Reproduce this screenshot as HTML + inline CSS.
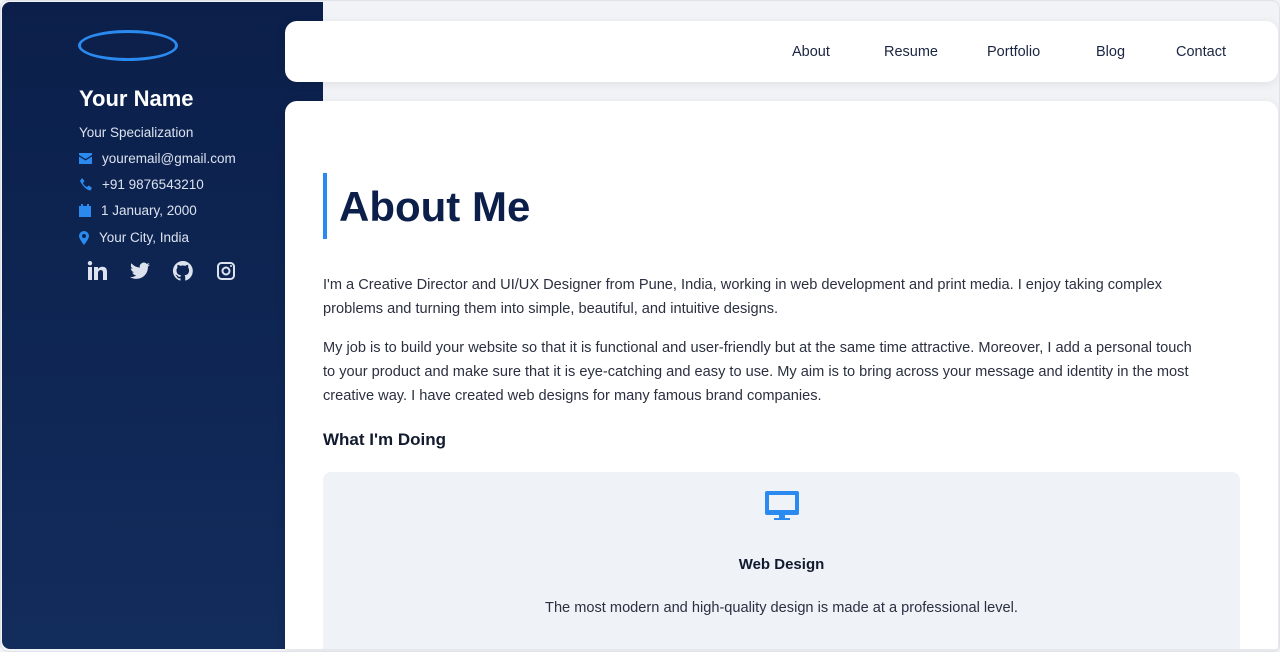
<!DOCTYPE html>
<html><head><meta charset="utf-8"><style>
*{box-sizing:border-box;margin:0;padding:0}
html,body{width:1280px;height:652px;overflow:hidden}
body{background:#f2f3f7;font-family:"Liberation Sans",sans-serif;position:relative}
.frame{position:absolute;left:0;top:0;width:1280px;height:652px;border:1px solid #dfe2e8;border-radius:8px;pointer-events:none;z-index:9}
.side{position:absolute;left:2px;top:2px;width:321px;height:647px;background:linear-gradient(#0b1f4a,#122c5c);border-radius:8px 0 0 8px}
.logo{position:absolute;left:78px;top:30px;width:100px;height:31px;border:3px solid #2b8af0;border-radius:50%}
.name{position:absolute;left:79px;top:86px;color:#fff;font-size:22px;font-weight:bold}
.spec{position:absolute;left:79px;top:125px;color:#dbe2ef;font-size:13.5px}
.row{position:absolute;left:79px;color:#dbe2ef;font-size:13.5px;display:flex;align-items:center;gap:10px}
.row svg{fill:#2b8af0}
.soc{position:absolute;left:86px;top:260px;display:flex;gap:21px}
.soc svg{fill:#dde3ee}
.nav{position:absolute;left:285px;top:21px;width:993px;height:61px;background:#fff;border-radius:12px;box-shadow:0 2px 10px rgba(0,0,0,.08)}
.nav a{position:absolute;top:23px;font-size:14.5px;color:#1a2540;text-decoration:none}
.card{position:absolute;left:285px;top:101px;width:993px;height:548px;background:#fff;border-radius:12px 12px 0 0;box-shadow:0 2px 10px rgba(0,0,0,.08);overflow:hidden}
h1{position:absolute;left:38px;top:72px;border-left:4px solid #2b8af0;padding-left:12px;height:66px;line-height:68px;font-size:42px;color:#0b1f4a;font-weight:bold}
p{position:absolute;left:38px;font-size:14.6px;line-height:24px;color:#2a3040}
h3{position:absolute;left:38px;top:329px;font-size:17px;color:#111a2e}
.svc{position:absolute;left:38px;top:371px;width:917px;height:200px;background:#eff2f7;border-radius:8px;text-align:center}
</style></head><body>
<div class="side"></div>
<div class="logo"></div>
<div class="name">Your Name</div>
<div class="spec">Your Specialization</div>
<div class="row" style="top:151px"><svg width="13" height="11" viewBox="0 0 13 11"><path d="M0 0h13v2L6.5 6 0 2z M0 3.5l6.5 4 6.5-4V11H0z"/></svg>youremail@gmail.com</div>
<div class="row" style="top:177px"><svg width="13" height="13" viewBox="0 0 13 13"><path d="M3 0l2.5 3-1.5 2q1 3 4 4l2-1.5 3 2.5-1.5 2.5Q6 12 1 3z"/></svg>+91 9876543210</div>
<div class="row" style="top:203px"><svg width="12" height="13" viewBox="0 0 12 13"><path d="M2 0h2v2h4V0h2v2h2v11H0V2h2z"/></svg>1 January, 2000</div>
<div class="row" style="top:230px"><svg width="10" height="14" viewBox="0 0 10 14"><path d="M5 0a5 5 0 0 1 5 5c0 3-5 9-5 9S0 8 0 5a5 5 0 0 1 5-5zm0 3a2 2 0 1 0 0 4 2 2 0 1 0 0-4z"/></svg>Your City, India</div>
<div class="soc">
<svg width="22" height="22" viewBox="0 0 22 22"><path d="M2 7h4v13H2zM4 1a2.2 2.2 0 1 1 0 4.4A2.2 2.2 0 0 1 4 1zM8 7h4v2q1.5-2.3 4.3-2.3C20 6.7 21 9 21 12v8h-4v-7c0-2-.6-3-2-3s-3 1-3 3v7H8z"/></svg>
<svg width="22" height="22" viewBox="0 0 22 22"><path d="M21 4.5a8 8 0 0 1-2.4.7 4 4 0 0 0 1.8-2.3 8 8 0 0 1-2.6 1A4.1 4.1 0 0 0 10.8 7.6 11.6 11.6 0 0 1 2.4 3.3a4.1 4.1 0 0 0 1.3 5.5 4 4 0 0 1-1.9-.5 4.1 4.1 0 0 0 3.3 4 4 4 0 0 1-1.8.1 4.1 4.1 0 0 0 3.8 2.8A8.2 8.2 0 0 1 1 17a11.6 11.6 0 0 0 17.9-10.3A8 8 0 0 0 21 4.5z"/></svg>
<svg width="22" height="22" viewBox="0 0 22 22"><path d="M11 1a10 10 0 0 0-3.2 19.5c.5.1.7-.2.7-.5v-1.8c-2.8.6-3.400-1.300-3.400-1.300-.5-1.200-1.100-1.500-1.100-1.500-.9-.6.1-.6.1-.6 1 .1 1.500 1 1.500 1 .9 1.500 2.400 1.100 2.900.8.1-.7.4-1.100.6-1.300-2.200-.3-4.600-1.100-4.600-5a3.900 3.900 0 0 1 1-2.700c-.1-.3-.4-1.300.1-2.700 0 0 .8-.3 2.700 1a9.500 9.500 0 0 1 5 0c1.900-1.300 2.700-1 2.700-1 .5 1.400.2 2.400.1 2.700a3.900 3.900 0 0 1 1 2.700c0 3.900-2.400 4.700-4.600 5 .4.3.7.9.7 1.900V20c0 .3.2.6.7.5A10 10 0 0 0 11 1z"/></svg>
<svg width="22" height="22" viewBox="0 0 22 22"><path d="M6.5 2h9A4.5 4.5 0 0 1 20 6.5v9a4.5 4.5 0 0 1-4.5 4.5h-9A4.5 4.5 0 0 1 2 15.5v-9A4.5 4.5 0 0 1 6.5 2zm0 2A2.5 2.5 0 0 0 4 6.5v9A2.5 2.5 0 0 0 6.5 18h9a2.5 2.5 0 0 0 2.5-2.5v-9A2.5 2.5 0 0 0 15.5 4zM11 6.5a4.5 4.5 0 1 1 0 9 4.5 4.5 0 0 1 0-9zm0 2a2.5 2.5 0 1 0 0 5 2.5 2.5 0 0 0 0-5zM16 5a1 1 0 1 1 0 2 1 1 0 0 1 0-2z"/></svg>
</div>
<div class="nav">
<a style="left:507px">About</a><a style="left:599px">Resume</a><a style="left:702px">Portfolio</a><a style="left:811px">Blog</a><a style="left:891px">Contact</a>
</div>
<div class="card">
<h1>About Me</h1>
<p style="top:172px;width:880px">I'm a Creative Director and UI/UX Designer from Pune, India, working in web development and print media. I enjoy taking complex problems and turning them into simple, beautiful, and intuitive designs.</p>
<p style="top:235px;width:875px">My job is to build your website so that it is functional and user-friendly but at the same time attractive. Moreover, I add a personal touch to your product and make sure that it is eye-catching and easy to use. My aim is to bring across your message and identity in the most creative way. I have created web designs for many famous brand companies.</p>
<h3>What I'm Doing</h3>
<div class="svc">
<svg style="position:absolute;left:441px;top:18px" width="36" height="32" viewBox="0 0 36 32"><path fill="#2b8af0" d="M3 1h30a2 2 0 0 1 2 2v20a2 2 0 0 1-2 2H21v3h5v2H10v-2h5v-3H3a2 2 0 0 1-2-2V3a2 2 0 0 1 2-2zm2 4v15h26V5z"/></svg>
<div style="position:absolute;left:0;width:917px;top:84px;font-size:15px;font-weight:bold;color:#111a2e">Web Design</div>
<div style="position:absolute;left:0;width:917px;top:128px;font-size:14.6px;color:#2a3040">The most modern and high-quality design is made at a professional level.</div>
</div>
</div>
<div class="frame"></div>
</body></html>
